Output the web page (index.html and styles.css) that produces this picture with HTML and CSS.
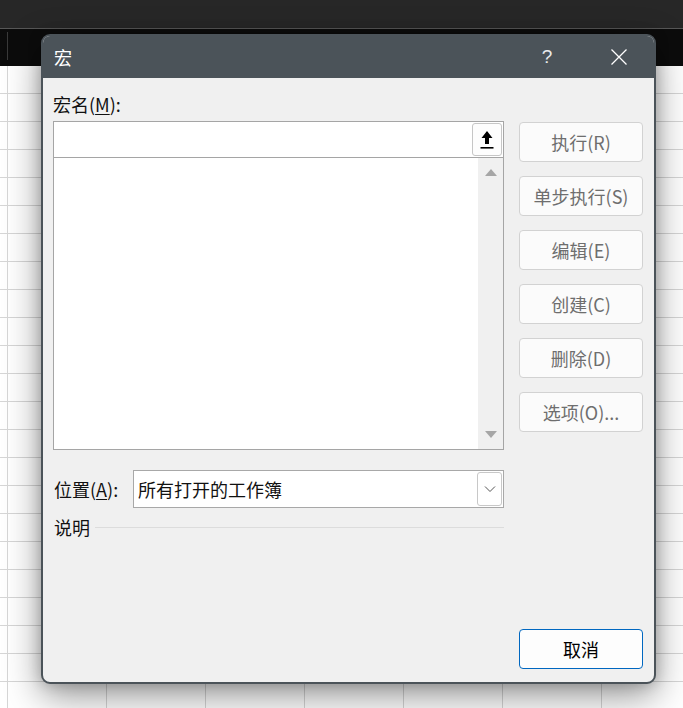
FILE: index.html
```html
<!DOCTYPE html>
<html lang="zh-CN">
<head>
<meta charset="utf-8">
<title>宏</title>
<link rel="stylesheet" href="styles.css">
</head>
<body>
<div class="app">
  <div class="topbar"></div>
  <div class="ribbon"></div>
  <div class="sheet"></div>

  <div class="dialog">
    <div class="titlebar">
      <span class="title">宏</span>
      <span class="help">?</span>
      <span class="close">
        <svg width="16" height="16" viewBox="0 0 16 16"><path d="M0.5 0.5 L15.5 15.5 M15.5 0.5 L0.5 15.5" stroke="#ffffff" stroke-width="1.3" fill="none"/></svg>
      </span>
    </div>
    <div class="body">
      <div class="left">
        <div class="label">宏名(<u>M</u>):</div>
        <div class="namebox">
          <span class="upbtn">
            <svg width="14" height="20" viewBox="0 0 14 20"><path d="M7 1 L12.5 8 L9 8 L9 14 L5 14 L5 8 L1.5 8 Z" fill="#000"/><rect x="0.5" y="17" width="13" height="1.6" fill="#000"/></svg>
          </span>
        </div>
        <div class="list">
          <div class="scroll">
            <span class="tri up"></span>
            <span class="tri down"></span>
          </div>
        </div>
        <div class="locrow">
          <span class="loclabel">位置(<u>A</u>):</span>
          <div class="select">
            <span class="value">所有打开的工作簿</span>
            <span class="dd">
              <svg width="12" height="8" viewBox="0 0 12 8"><path d="M1 1.5 L6 6.5 L11 1.5" stroke="#555" stroke-width="1" fill="none"/></svg>
            </span>
          </div>
        </div>
        <div class="desc">
          <span>说明</span>
          <span class="rule"></span>
        </div>
      </div>
      <div class="right">
        <button class="btn">执行(R)</button>
        <button class="btn">单步执行(S)</button>
        <button class="btn">编辑(E)</button>
        <button class="btn">创建(C)</button>
        <button class="btn">删除(D)</button>
        <button class="btn">选项(O)...</button>
        <button class="btn cancel">取消</button>
      </div>
    </div>
  </div>
</div>
</body>
</html>
```
FILE: styles.css
```css
* { box-sizing: border-box; }
html, body { margin: 0; padding: 0; }
body {
  width: 683px;
  height: 708px;
  overflow: hidden;
  font-family: "Noto Sans CJK SC", "Noto Sans", sans-serif;
  background: #ffffff;
}
.app {
  position: relative;
  width: 683px;
  height: 708px;
  display: flex;
  flex-direction: column;
}
.topbar {
  height: 29px;
  background: #272727;
  border-bottom: 1px solid #575757;
}
.ribbon {
  height: 37px;
  background: #0c0c0c;
  background-image: linear-gradient(#3a3a3a, #3a3a3a);
  background-size: 1px 28px;
  background-position: 7px 3px;
  background-repeat: no-repeat;
}
.sheet {
  flex: 1;
  background-color: #ffffff;
  background-image:
    linear-gradient(to bottom, transparent 27px, #d6d6d6 27px, #d6d6d6 28px, transparent 28px),
    linear-gradient(to right, transparent 7px, #d6d6d6 7px, #d6d6d6 8px, transparent 8px);
  background-size: 100% 28px, 99px 100%;
  background-position: 0 0, 0 0;
}

.dialog {
  position: absolute;
  left: 41px;
  top: 34px;
  width: 615px;
  height: 650px;
  border: 2px solid #4b5359;
  border-radius: 9px;
  background: #f0f0f0;
  overflow: hidden;
  display: flex;
  flex-direction: column;
  box-shadow: 0 12px 36px rgba(0, 0, 0, 0.42), 0 0 14px rgba(0, 0, 0, 0.2);
}
.titlebar {
  height: 42px;
  background: #4b5359;
  display: flex;
  align-items: center;
  padding-left: 11px;
  color: #ffffff;
  flex-shrink: 0;
}
.title {
  font-size: 18px;
  line-height: 22px;
  margin-top: -1px;
}
.help {
  margin-left: auto;
  font-family: "Liberation Sans", sans-serif;
  font-size: 19px;
  line-height: 22px;
  margin-top: -1px;
  width: 12px;
  text-align: center;
  margin-right: 58px;
  color: #e8eaec;
}
.close {
  display: flex;
  margin-right: 27px;
  margin-top: -1px;
}

.body {
  flex: 1;
  display: flex;
  gap: 15px;
  padding: 15px 11px 13px 10px;
}
.left {
  width: 451px;
  display: flex;
  flex-direction: column;
}
.label, .loclabel, .desc {
  font-size: 18px;
  line-height: 22px;
  color: #111111;
}
u { text-underline-offset: 2px; }
.namebox {
  margin-top: 6px;
  height: 37px;
  background: #ffffff;
  border: 1px solid #a5a5a5;
  display: flex;
  justify-content: flex-end;
  align-items: center;
  padding-right: 1px;
}
.upbtn {
  width: 30px;
  height: 33px;
  border: 1px solid #c6c6c6;
  border-radius: 3px;
  background: #fdfdfd;
  display: flex;
  align-items: center;
  justify-content: center;
}
.list {
  height: 292px;
  background: #ffffff;
  border: 1px solid #a5a5a5;
  border-top: none;
  display: flex;
  justify-content: flex-end;
}
.scroll {
  width: 25px;
  background: #f0f0f0;
  display: flex;
  flex-direction: column;
  align-items: center;
  justify-content: space-between;
  padding: 11px 0 11px;
}
.tri {
  width: 0;
  height: 0;
  border-left: 6px solid transparent;
  border-right: 6px solid transparent;
}
.tri.up { border-bottom: 7px solid #a6a6a6; }
.tri.down { border-top: 7px solid #a6a6a6; }

.locrow {
  margin-top: 20px;
  display: flex;
  align-items: center;
}
.loclabel {
  width: 80px;
  padding-left: 1px;
}
.select {
  flex: 1;
  height: 38px;
  background: #ffffff;
  border: 1px solid #a8a8a8;
  display: flex;
  align-items: center;
  padding-left: 4px;
  padding-right: 1px;
}
.value {
  font-size: 18px;
  line-height: 22px;
  color: #111111;
}
.dd {
  margin-left: auto;
  width: 25px;
  height: 34px;
  border: 1px solid #c8c8c8;
  border-radius: 3px;
  background: #ffffff;
  display: flex;
  align-items: center;
  justify-content: center;
}
.desc {
  margin-top: 8px;
  display: flex;
  align-items: center;
  gap: 5px;
  padding-left: 1px;
}
.rule {
  flex: 1;
  height: 1px;
  background: #dcdcdc;
}

.right {
  width: 124px;
  display: flex;
  flex-direction: column;
  gap: 14px;
  padding-top: 29px;
}
.btn {
  height: 40px;
  width: 124px;
  border: 1px solid #d2d2d2;
  border-radius: 4px;
  background: #fbfbfb;
  color: #6e6e6e;
  font-family: "Noto Sans CJK SC", "Noto Sans", sans-serif;
  font-size: 18px;
  line-height: 22px;
  padding: 0;
}
.btn.cancel {
  margin-top: auto;
  border: 1px solid #0067c0;
  background: #fdfdfd;
  color: #000000;
}
```
